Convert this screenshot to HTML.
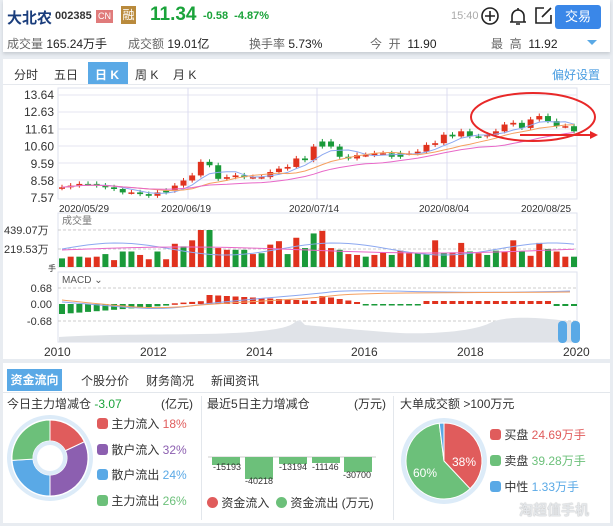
<!DOCTYPE html>
<html><head><meta charset="utf-8">
<style>
*{margin:0;padding:0;box-sizing:border-box}
body{width:613px;height:526px;background:#e8ecf1;font-family:"Liberation Sans","Noto Sans CJK SC",sans-serif;position:relative;overflow:hidden;font-size:12px;color:#333}
.a{position:absolute;white-space:nowrap}
</style></head><body>
<div class="a" style="left:3px;top:0;width:607px;height:52px;background:#fff;box-shadow:0 2px 3px #c8cdd3"></div>
<div class="a" style="left:7px;top:7px;font-size:15px;font-weight:bold;color:#1a3d7c">大北农</div>
<div class="a" style="left:55px;top:10px;font-size:11px;font-weight:bold;color:#333">002385</div>
<div class="a" style="left:96px;top:10px;width:17px;height:13px;background:#e07b7b;color:#fff;font-size:9px;text-align:center;line-height:13px">CN</div>
<div class="a" style="left:121px;top:6px;width:15px;height:18px;background:#b98a3c;color:#fff;font-size:12px;text-align:center;line-height:18px">融</div>
<div class="a" style="left:150px;top:4px;font-size:19px;font-weight:bold;color:#1aa33a">11.34</div>
<div class="a" style="left:203px;top:10px;font-size:11px;font-weight:bold;color:#1aa33a">-0.58 &nbsp;-4.87%</div>
<div class="a" style="left:451px;top:10px;font-size:11px;color:#aaa">15:40</div>
<svg class="a" style="left:480px;top:5px" width="100" height="24"><circle cx="10" cy="11" r="8" fill="none" stroke="#222" stroke-width="1.6"/><path d="M10 6v10M5 11h10" stroke="#222" stroke-width="1.6"/><path d="M30 17h16M32 17v-6a6 6 0 0 1 12 0v6M36 19h4M38 3v2" fill="none" stroke="#222" stroke-width="1.6"/><path d="M64 3h-8v15h15v-8M62 12l9-9" fill="none" stroke="#222" stroke-width="1.6"/></svg>
<div class="a" style="left:555px;top:5px;width:46px;height:24px;background:#3a87e8;border-radius:3px;color:#fff;font-size:13px;text-align:center;line-height:24px">交易</div>
<div class="a" style="left:7px;top:35px;font-size:12px;color:#666">成交量 <span style="color:#222">165.24万手</span></div>
<div class="a" style="left:128px;top:35px;font-size:12px;color:#666">成交额 <span style="color:#222">19.01亿</span></div>
<div class="a" style="left:249px;top:35px;font-size:12px;color:#666">换手率 <span style="color:#222">5.73%</span></div>
<div class="a" style="left:370px;top:35px;font-size:12px;color:#666">今 &nbsp;开 <span style="color:#222">&nbsp;11.90</span></div>
<div class="a" style="left:491px;top:35px;font-size:12px;color:#666">最 &nbsp;高 <span style="color:#222">&nbsp;11.92</span></div>
<div class="a" style="left:587px;top:40px;width:0;height:0;border-left:5px solid transparent;border-right:5px solid transparent;border-top:5px solid #5aa9e6"></div>

<div class="a" style="left:3px;top:59px;width:607px;height:300px;background:#fff"></div>
<div class="a" style="left:14px;top:66px;font-size:12px;color:#333">分时</div>
<div class="a" style="left:54px;top:66px;font-size:12px;color:#333">五日</div>
<div class="a" style="left:88px;top:62px;width:40px;height:22px;background:#5aa9e6"></div>
<div class="a" style="left:95px;top:66px;font-size:12px;color:#fff;font-weight:bold">日 K</div>
<div class="a" style="left:135px;top:66px;font-size:12px;color:#333">周 K</div>
<div class="a" style="left:173px;top:66px;font-size:12px;color:#333">月 K</div>
<div class="a" style="left:552px;top:66px;font-size:12px;color:#4a9de0">偏好设置</div>
<div class="a" style="left:3px;top:84px;width:607px;height:1px;background:#e6e9ee"></div>
<svg id="ch" class="a" style="left:0;top:0" width="613" height="360"></svg>

<div class="a" style="left:3px;top:363px;width:607px;height:160px;background:#fff"></div>
<div class="a" style="left:7px;top:369px;width:55px;height:22px;background:#5aa9e6;color:#fff;font-size:12px;font-weight:bold;line-height:22px;text-align:center">资金流向</div>
<div class="a" style="left:81px;top:372px;font-size:12px">个股分价</div>
<div class="a" style="left:146px;top:372px;font-size:12px">财务简况</div>
<div class="a" style="left:211px;top:372px;font-size:12px">新闻资讯</div>
<div class="a" style="left:3px;top:392px;width:607px;height:1px;background:#e3e7ec"></div>
<div class="a" style="left:201px;top:396px;width:1px;height:124px;background:#e3e7ec"></div>
<div class="a" style="left:393px;top:396px;width:1px;height:124px;background:#e3e7ec"></div>
<div class="a" style="left:7px;top:395px;font-size:12px">今日主力增减仓 <span style="color:#1aa33a">-3.07</span></div>
<div class="a" style="left:161px;top:395px;font-size:12px">(亿元)</div>
<div class="a" style="left:207px;top:395px;font-size:12px">最近5日主力增减仓</div>
<div class="a" style="left:354px;top:395px;font-size:12px">(万元)</div>
<div class="a" style="left:400px;top:395px;font-size:12px">大单成交额 &gt;100万元</div>
<svg id="bt" class="a" style="left:0;top:0" width="613" height="526"></svg>
<div class="a" style="left:97px;top:412px;font-size:12px;line-height:25.5px">
<div><span style="display:inline-block;width:11px;height:11px;border-radius:3px;background:#e05c5c;vertical-align:-1px"></span> 主力流入 <span style="color:#e05c5c">18%</span></div>
<div><span style="display:inline-block;width:11px;height:11px;border-radius:3px;background:#8c5fb0;vertical-align:-1px"></span> 散户流入 <span style="color:#8c5fb0">32%</span></div>
<div><span style="display:inline-block;width:11px;height:11px;border-radius:3px;background:#5aa9e6;vertical-align:-1px"></span> 散户流出 <span style="color:#5aa9e6">24%</span></div>
<div><span style="display:inline-block;width:11px;height:11px;border-radius:3px;background:#6cc07a;vertical-align:-1px"></span> 主力流出 <span style="color:#6cc07a">26%</span></div>
</div>
<div class="a" style="left:207px;top:494px;font-size:12px"><span style="display:inline-block;width:11px;height:11px;border-radius:50%;background:#e05c5c;vertical-align:-1px"></span> 资金流入 &nbsp;<span style="display:inline-block;width:11px;height:11px;border-radius:50%;background:#6cc07a;vertical-align:-1px"></span> 资金流出 (万元)</div>
<div class="a" style="left:490px;top:422px;font-size:12px;line-height:26px">
<div><span style="display:inline-block;width:11px;height:11px;border-radius:3px;background:#e05c5c;vertical-align:-1px"></span> 买盘 <span style="color:#e05c5c">24.69万手</span></div>
<div><span style="display:inline-block;width:11px;height:11px;border-radius:3px;background:#6cc07a;vertical-align:-1px"></span> 卖盘 <span style="color:#6cc07a">39.28万手</span></div>
<div><span style="display:inline-block;width:11px;height:11px;border-radius:3px;background:#5aa9e6;vertical-align:-1px"></span> 中性 <span style="color:#5aa9e6">1.33万手</span></div>
</div>
<div class="a" style="left:519px;top:500px;font-size:14px;font-weight:bold;color:#e4e7ea;text-shadow:0 0 1px #999">淘超值手机</div>
<script>
var s='',R='#e0321e',G='#1a9a3a';
function t(x,y,tx,o){return '<text x="'+x+'" y="'+y+'" '+(o||'')+'>'+tx+'</text>';}
s+='<rect x="58" y="88" width="519" height="111" fill="none" stroke="#dde0ee"/>';
[95,112,129,146,163,180].forEach(function(y){s+='<line x1="58" x2="577" y1="'+y+'" y2="'+y+'" stroke="#e4e6f0"/>';});
[188,317,447].forEach(function(x){s+='<line x1="'+x+'" x2="'+x+'" y1="88" y2="199" stroke="#dcdcf0"/>';});
s+='<g font-size="12" fill="#333" text-anchor="end">';
['13.64','12.63','11.61','10.60','9.59','8.58','7.57'].forEach(function(v,i){s+=t(54,99+i*17.2,v);});
s+='</g><g font-size="10" fill="#333">'+t(59,212,'2020/05/29')+t(161,212,'2020/06/19')+t(289,212,'2020/07/14')+t(419,212,'2020/08/04')+t(521,212,'2020/08/25')+'</g>';
var p=[8.2,8.3,8.4,8.4,8.3,8.2,8.1,7.9,7.9,7.8,7.7,7.9,8.0,8.3,8.6,8.9,9.7,9.5,8.7,8.8,8.9,8.8,8.8,8.8,9.1,9.3,9.4,9.9,9.8,10.6,10.9,10.6,10.0,9.9,10.1,10.1,10.2,10.2,10.0,10.2,10.2,10.3,10.7,10.8,11.3,11.2,11.5,11.2,11.2,11.3,11.5,11.9,12.0,11.7,12.2,12.4,12.1,11.8,11.8,11.5];
function Y(v){return 95+(13.64-v)/6.07*103;}
var n=p.length,dx=(574-62)/(n-1);
for(var i=0;i<n;i++){var x=62+i*dx,c=p[i],o=i?p[i-1]:c-0.05,col=c>=o?R:G;if(i%9==3)col=G;
var hi=Math.max(c,o)+0.15,lo=Math.min(c,o)-0.12;
s+='<line x1="'+x+'" x2="'+x+'" y1="'+Y(hi)+'" y2="'+Y(lo)+'" stroke="'+col+'"/>';
var h=Math.max(1.5,Math.abs(Y(c)-Y(o)));s+='<rect x="'+(x-3)+'" y="'+Math.min(Y(c),Y(o))+'" width="6" height="'+h+'" fill="'+col+'"/>';}
function ma(k){var pts=[];for(var i=0;i<n;i++){var a=0,m=0;for(var j=Math.max(0,i-k+1);j<=i;j++){a+=p[j];m++;}pts.push((62+i*dx).toFixed(1)+','+Y(a/m).toFixed(1));}return pts.join(' ');}
s+='<polyline points="'+ma(5)+'" fill="none" stroke="#8ca8f0"/><polyline points="'+ma(10)+'" fill="none" stroke="#f5a060"/><polyline points="'+ma(20)+'" fill="none" stroke="#e868c8"/>';
s+='<ellipse cx="533" cy="117" rx="62" ry="24" fill="none" stroke="#e82828" stroke-width="2"/><path d="M520 135h74" stroke="#e82828" stroke-width="2"/><path d="M590 131l8 4-8 4z" fill="#e82828"/>';
s+='<rect x="58" y="213" width="519" height="54" fill="none" stroke="#dde0ee"/><line x1="58" x2="577" y1="230" y2="230" stroke="#ccc" stroke-dasharray="3,2"/><line x1="58" x2="577" y1="249" y2="249" stroke="#ccc" stroke-dasharray="3,2"/>';
s+='<g font-size="11" fill="#333">'+t(4,234,'439.07万')+t(4,253,'219.53万')+t(48,271,'手','font-size="8"')+t(62,224,'成交量','fill="#777" font-size="10"')+'</g>';
var v=[10,12,12,11,12,15,8,18,18,14,9,18,9,27,24,31,43,43,22,20,20,20,15,16,26,30,15,34,22,39,42,22,20,15,14,12,14,17,14,19,16,16,15,31,16,17,28,18,16,14,19,18,31,18,13,28,21,18,12,12];
for(var i=0;i<n;i++){var x=62+i*dx,col=(i%3==2||i%7==0)?G:R;var h=v[i]*37/43;s+='<rect x="'+(x-3)+'" y="'+(267-h)+'" width="6" height="'+h+'" fill="'+col+'"/>';}
var l1=[],l2=[];for(var i=0;i<n;i++){var x=62+i*dx;l1.push(x+','+(267-18-6*Math.sin(i/4)));l2.push(x+','+(267-17-3*Math.sin(i/9)));}
s+='<polyline points="'+l1+'" fill="none" stroke="#8ca8f0"/><polyline points="'+l2+'" fill="none" stroke="#e868c8"/>';
s+='<rect x="58" y="272" width="519" height="70" fill="none" stroke="#dde0ee"/><line x1="58" x2="577" y1="288" y2="288" stroke="#ccc" stroke-dasharray="3,2"/><line x1="58" x2="577" y1="321" y2="321" stroke="#ccc" stroke-dasharray="3,2"/>';
s+='<g font-size="11" fill="#333" text-anchor="end">'+t(52,292,'0.68')+t(52,308,'0.00')+t(52,325,'-0.68')+'</g>'+t(62,283,'MACD ⌄','font-size="10" fill="#555"');
for(var i=0;i<n;i++){var x=62+i*dx,m=(i<13?-(10-i*0.7):i<30?(i-12)*0.7:i<35?8-(i-30)*1.5:i<42?-1:i<57?3:-2);if(i>=17&&i<30)m=9-(i-17)*0.5;var col=m>=0?R:G;s+='<rect x="'+(x-3)+'" y="'+(m>=0?304-m:304)+'" width="6" height="'+Math.max(1.5,Math.abs(m))+'" fill="'+col+'"/>';}
s+='<path d="M62 302 C120 306 150 312 190 306 S300 296 330 292 S450 295 570 291" fill="none" stroke="#8ca8f0"/><path d="M62 300 C120 306 150 310 190 306 S300 300 330 296 S450 293 570 292" fill="none" stroke="#f5a060"/>';
s+='<path d="M59 342 L59 337 C120 333 200 336 250 332 S290 322 300 320 L305 325 S380 332 400 333 S470 333 490 323 S560 320 575 322 L575 342Z" fill="#e0e3e8"/>';
s+='<rect x="558" y="321" width="9" height="22" rx="4" fill="#5aa9e6"/><rect x="571" y="321" width="9" height="22" rx="4" fill="#5aa9e6"/>';
s+='<g font-size="12" fill="#333">'+t(44,356,'2010')+t(140,356,'2012')+t(246,356,'2014')+t(351,356,'2016')+t(457,356,'2018')+t(563,356,'2020')+'</g>';
document.getElementById('ch').innerHTML=s;
function arc(cx,cy,r,a0,a1,col,ri){function P(a,rr){return (cx+rr*Math.sin(a*2*Math.PI)).toFixed(2)+' '+(cy-rr*Math.cos(a*2*Math.PI)).toFixed(2);}
var lg=(a1-a0)>0.5?1:0;if(ri)return '<path d="M'+P(a0,r)+' A'+r+' '+r+' 0 '+lg+' 1 '+P(a1,r)+' L'+P(a1,ri)+' A'+ri+' '+ri+' 0 '+lg+' 0 '+P(a0,ri)+'Z" fill="'+col+'" stroke="#fff" stroke-width="1"/>';
return '<path d="M'+cx+' '+cy+' L'+P(a0,r)+' A'+r+' '+r+' 0 '+lg+' 1 '+P(a1,r)+'Z" fill="'+col+'" stroke="#fff" stroke-width="1"/>';}
var cx1=50,cy1=458;
var b='<circle cx="'+cx1+'" cy="'+cy1+'" r="43" fill="#dcebf8"/><circle cx="'+cx1+'" cy="'+cy1+'" r="39" fill="#fff"/>';
b+=arc(cx1,cy1,38,0,0.18,'#e05c5c',17)+arc(cx1,cy1,38,0.18,0.5,'#8c5fb0',17)+arc(cx1,cy1,38,0.5,0.74,'#5aa9e6',17)+arc(cx1,cy1,38,0.74,1,'#6cc07a',17);
b+='<circle cx="'+cx1+'" cy="'+cy1+'" r="17" fill="#dcebf8"/><circle cx="'+cx1+'" cy="'+cy1+'" r="13" fill="#fff"/>';
b+='<circle cx="444" cy="461" r="43" fill="#dcebf8"/>'+arc(444,461,38,0,0.38,'#e05c5c')+arc(444,461,38,0.38,0.98,'#6cc07a')+arc(444,461,38,0.98,1,'#5aa9e6');
b+='<g font-size="12" fill="#fff">'+t(452,466,'38%')+t(413,477,'60%')+'</g>';
b+='<line x1="208" x2="376" y1="457" y2="457" stroke="#ccc"/>';
[[212,8,'-15193',213,470],[245,22,'-40218',245,484],[279,7,'-13194',279,470],[312,6,'-11146',312,470],[344,15,'-30700',343,478]].forEach(function(a){b+='<rect x="'+a[0]+'" y="457" width="28" height="'+a[1]+'" fill="#6cc07a"/>'+t(a[3],a[4],a[2],'font-size="9" fill="#333"');});
document.getElementById('bt').innerHTML=b;
</script>
</body></html>
